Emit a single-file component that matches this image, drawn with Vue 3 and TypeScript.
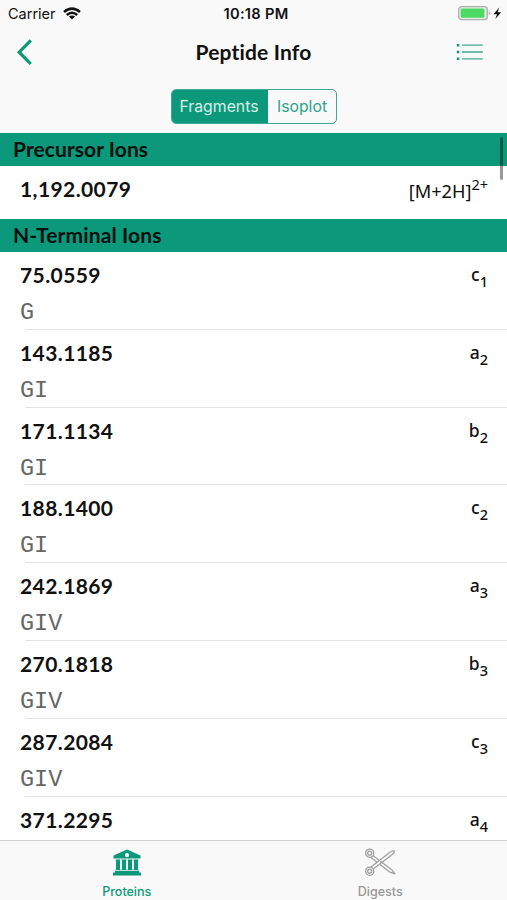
<script setup lang="ts">
interface Fragment {
  mass: string
  sequence?: string
  series: string
  index: number
}

const fragments: Fragment[] = [
  { mass: '75.0559', sequence: 'G', series: 'c', index: 1 },
  { mass: '143.1185', sequence: 'GI', series: 'a', index: 2 },
  { mass: '171.1134', sequence: 'GI', series: 'b', index: 2 },
  { mass: '188.1400', sequence: 'GI', series: 'c', index: 2 },
  { mass: '242.1869', sequence: 'GIV', series: 'a', index: 3 },
  { mass: '270.1818', sequence: 'GIV', series: 'b', index: 3 },
  { mass: '287.2084', sequence: 'GIV', series: 'c', index: 3 },
  { mass: '371.2295', series: 'a', index: 4 },
]
</script>

<template>
  <div class="screen">
    <header class="top">
      <div class="status">
        <div class="carrier">
          <span>Carrier</span>
          <svg width="18" height="13" viewBox="0 0 18 13" fill="none" stroke="#111" stroke-width="2.5">
            <path d="M1 5Q9-1.8 17 5M3.8 8Q9 3.5 14.2 8" />
            <path d="M9 12.6 5.9 9.6Q9 7.2 12.1 9.6Z" fill="#111" stroke="none" />
          </svg>
        </div>
        <span class="clock">10:18 PM</span>
        <div class="power">
          <svg width="44" height="15" viewBox="0 0 44 15">
            <rect x="0.7" y="0.7" width="28.6" height="13" rx="3" fill="#e6f0e6" stroke="#aaaead" stroke-width="1.3" />
            <rect x="2.7" y="2.6" width="23.7" height="9.2" rx="1" fill="#4cd964" />
            <path d="M30.8 4.8Q33 7.2 30.8 9.6Z" fill="#a6a6a6" />
            <path d="M41.2 1.5 35.5 8.2H39L37.3 13 43.2 6.2H39.7Z" fill="#111" />
          </svg>
        </div>
      </div>
      <nav class="navbar">
        <button class="back" aria-label="Back">
          <svg width="18" height="28" viewBox="0 0 18 28" fill="none" stroke="#0c987b" stroke-width="3.2">
            <path d="M15.8 2.4 4.2 14.2 15.8 26" />
          </svg>
        </button>
        <h1>Peptide Info</h1>
        <button class="list" aria-label="List">
          <svg width="28" height="18" viewBox="0 0 28 18" fill="none" stroke="#3eaa91">
            <path d="M6 2.2H26.8M6 9H26.8M6 15.8H26.8" stroke-width="1.3" />
            <path d="M.8 2.2H3.3M.8 9H3.3M.8 15.8H3.3" stroke="#0c987b" stroke-width="2.4" />
          </svg>
        </button>
      </nav>
      <div class="segments">
        <button class="segment active">Fragments</button>
        <button class="segment">Isoplot</button>
      </div>
    </header>

    <main class="content">
      <h2>Precursor Ions</h2>
      <div class="row precursor">
        <span class="mass">1,192.0079</span>
        <span class="ion charge">[M+2H]<sup>2+</sup></span>
      </div>
      <h2 class="wide">N-Terminal Ions</h2>
      <div v-for="item in fragments" :key="item.mass" class="row">
        <div>
          <div class="mass">{{ item.mass }}</div>
          <div v-if="item.sequence" class="sequence">{{ item.sequence }}</div>
        </div>
        <span class="ion">{{ item.series }}<sub>{{ item.index }}</sub></span>
      </div>
      <div class="scrollbar"></div>
    </main>

    <footer class="tabs">
      <div class="tab selected">
        <svg width="32" height="30" viewBox="0 0 32 30" fill="#0c987b">
          <path fill-rule="evenodd" d="M16 1.5 29.5 7.6V10.5H2.5V7.6ZM16 5.1A2.1 2.1 0 1 0 16 9.3A2.1 2.1 0 1 0 16 5.1Z" />
          <path d="M4.7 11.5H9.3V12.8H9V21H9.3V22H4.7V21H5V12.8H4.7ZM10.7 11.5H15.3V12.8H15V21H15.3V22H10.7V21H11V12.8H10.7ZM16.7 11.5H21.3V12.8H21V21H21.3V22H16.7V21H17V12.8H16.7ZM22.7 11.5H27.3V12.8H27V21H27.3V22H22.7V21H23V12.8H22.7ZM4 22.8H28V24.5H30V27.5H2V24.5H4Z" />
        </svg>
        <span>Proteins</span>
      </div>
      <div class="tab">
        <svg width="34" height="30" viewBox="0 0 34 30" fill="none" stroke="#a0a0a0" stroke-width="1.3">
          <path d="M9.5 7.2 29.3 22.3 32 25.8 27 24.2 8 9.6Z" fill="#f9f9f9" stroke-linejoin="round" />
          <path d="M9.5 21.6 29.3 6.5Q32 4.2 31.6 3 29.5 2.3 27 4.2L8 19Z" fill="#f9f9f9" stroke-linejoin="round" />
          <circle cx="6.7" cy="5.2" r="4.1" fill="#f9f9f9" /><circle cx="6.7" cy="5.2" r="2" />
          <circle cx="6.7" cy="23.2" r="4.1" fill="#f9f9f9" /><circle cx="6.7" cy="23.2" r="2" />
          <circle cx="18.2" cy="13.8" r=".4" />
        </svg>
        <span>Digests</span>
      </div>
    </footer>
  </div>
</template>

<style>
body {
  margin: 0;
  overflow: hidden;
}
</style>

<style scoped>
.screen {
  width: 507px;
  height: 900px;
  display: flex;
  flex-direction: column;
  overflow: hidden;
  background: #fff;
  color: #111;
  font-family: Lato, sans-serif;
  font-variant-ligatures: none;
}
button {
  border: 0;
  padding: 0;
  background: none;
  font: inherit;
}
svg {
  display: block;
}
.top {
  height: 133px;
  flex: none;
  background: #f9f9f9;
}
.status {
  display: grid;
  grid-template-columns: 1fr auto 1fr;
  align-items: center;
  height: 27px;
  padding: 0 5px 0 8px;
  font: 15px/27px Inter, sans-serif;
}
.carrier {
  display: flex;
  align-items: center;
  gap: 7px;
  font-size: 14.5px;
}
.clock {
  padding: 2px 0 0 2px;
  font-size: 14.7px;
  line-height: 25px;
  font-weight: 600;
  letter-spacing: 0.25px;
}
.power {
  display: flex;
  justify-content: flex-end;
}
.navbar {
  display: flex;
  align-items: center;
  justify-content: space-between;
  height: 50px;
  padding: 0 23px 0 15px;
}
h1 {
  margin: -1px 0 0 18px;
  font-size: 21px;
  line-height: 28px;
  font-weight: 700;
  letter-spacing: 0.17px;
}
.segments {
  display: flex;
  width: 166px;
  height: 35px;
  box-sizing: border-box;
  margin: 12px 0 0 171px;
  border: 1.3px solid #3eaa91;
  border-radius: 5px;
  overflow: hidden;
}
.segment {
  flex: 1;
  color: #2ea389;
  font: 15.8px/32px Inter, sans-serif;
}
.segment.active {
  flex: 0 0 96px;
  padding-right: 2px;
  box-sizing: border-box;
  background: #0c987b;
  color: #d5f0e9;
}
.content {
  position: relative;
  height: 707px;
  flex: none;
  overflow: hidden;
}
h2 {
  box-sizing: border-box;
  height: 33px;
  margin: 0;
  padding-left: 13px;
  background: #0c987b;
  color: #06100d;
  font-size: 21px;
  line-height: 32px;
  font-weight: 700;
  letter-spacing: 0.07px;
}
h2.wide {
  letter-spacing: 0.13px;
}
.row {
  display: flex;
  justify-content: space-between;
  box-sizing: border-box;
  height: 77.8px;
  padding: 9px 19px 0 20px;
  background: linear-gradient(#e4e4e4, #e4e4e4) 25px 100% / 100% 1px no-repeat;
}
.row.precursor {
  height: 53px;
  background: none;
}
.mass {
  font-size: 21px;
  line-height: 27px;
  font-weight: 700;
  letter-spacing: 0.4px;
}
.sequence {
  margin-top: 12px;
  color: #666;
  font: 23.5px/26px "Liberation Mono", monospace;
}
.ion {
  font: 500 17.5px/27px "Noto Sans", sans-serif;
}
.ion sub,
.ion sup {
  font-size: 14.5px;
  line-height: 0;
  vertical-align: baseline;
  position: relative;
}
.ion sub {
  top: 6px;
}
.ion sup {
  top: -8px;
}
.ion.charge {
  padding-top: 3px;
  font-size: 18.2px;
  font-weight: 400;
}
.scrollbar {
  position: absolute;
  top: 4px;
  right: 4px;
  width: 3px;
  height: 43px;
  border-radius: 2px;
  background: rgba(0, 0, 0, 0.4);
}
.tabs {
  display: flex;
  flex: 1;
  box-sizing: border-box;
  border-top: 1px solid #d2d2d2;
  background: #f9f9f9;
}
.tab {
  display: flex;
  flex: 1;
  flex-direction: column;
  align-items: center;
  padding-top: 7px;
  color: #979797;
  font: 500 12.5px/16px Inter, sans-serif;
}
.tab span {
  margin-top: 6px;
}
.tab.selected {
  color: #0c987b;
}
</style>
